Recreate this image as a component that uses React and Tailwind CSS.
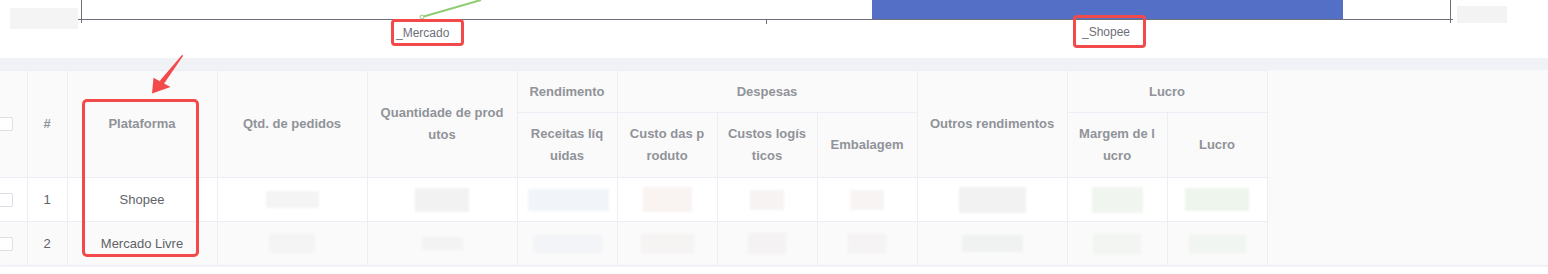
import React from 'react';

const th = 'border-r border-b border-[#ebeef5] px-[10px] text-center align-middle font-bold text-[13px] leading-[22px] text-[#909399] break-all';
const td = 'border-r border-b border-[#ebeef5] px-[10px] text-center align-middle text-[13px] leading-[22px] text-[#606266]';

const rows = [
  {
    id: 1,
    name: 'Shopee',
    bg: 'bg-white',
    blobs: [
      'w-[53px] h-[17px] bg-[#f4f4f4]',
      'w-[54px] h-[24px] bg-[#f2f2f2]',
      'w-[81px] h-[22px] bg-[#f1f4f8]',
      'w-[49px] h-[25px] bg-[#f9f3f2]',
      'w-[34px] h-[20px] bg-[#f7f3f3]',
      'w-[34px] h-[20px] bg-[#f8f4f4]',
      'w-[67px] h-[26px] bg-[#f2f2f2]',
      'w-[51px] h-[26px] bg-[#f0f5f0]',
      'w-[64px] h-[23px] bg-[#edf5ec]',
    ],
  },
  {
    id: 2,
    name: 'Mercado Livre',
    bg: 'bg-[#fafafa]',
    blobs: [
      'w-[46px] h-[19px] bg-[#f4f4f4]',
      'w-[41px] h-[13px] bg-[#f3f3f3]',
      'w-[69px] h-[18px] bg-[#f2f4f7]',
      'w-[53px] h-[19px] bg-[#f6f3f3]',
      'w-[38px] h-[21px] bg-[#f4f2f2]',
      'w-[38px] h-[19px] bg-[#f5f3f3]',
      'w-[61px] h-[17px] bg-[#f0f2f1]',
      'w-[48px] h-[20px] bg-[#f2f5f2]',
      'w-[57px] h-[18px] bg-[#f1f5f1]',
    ],
  },
];

const Checkbox = () => (
  <span className="-ml-px block h-[14px] w-[14px] rounded-[2px] border border-[#dcdfe6] bg-white" />
);

const Chart = () => (
  <svg width="1548" height="58" className="block">
    <rect x="10" y="8" width="68" height="21" fill="#f4f4f4" />
    <rect x="1457" y="6" width="50" height="17" fill="#f2f3f2" />
    <rect x="872" y="0" width="471" height="19" fill="#5470c6" />
    <line x1="81.5" y1="0" x2="81.5" y2="23" stroke="#6e7079" />
    <line x1="1450.5" y1="0" x2="1450.5" y2="23" stroke="#6e7079" />
    <line x1="78" y1="19.5" x2="1453" y2="19.5" stroke="#6e7079" />
    <line x1="766.5" y1="19" x2="766.5" y2="24" stroke="#6e7079" />
    <line x1="422" y1="17" x2="481" y2="0" stroke="#91cc75" strokeWidth="2" />
    <circle cx="422" cy="17" r="2" fill="#fff" stroke="#91cc75" />
    <text x="396" y="37" fontSize="12" fill="#6e7079" fontFamily="'Liberation Sans', Arial, sans-serif">_Mercado</text>
    <text x="1082" y="36" fontSize="12" fill="#6e7079" fontFamily="'Liberation Sans', Arial, sans-serif">_Shopee</text>
  </svg>
);

const Arrow = () => (
  <svg width="60" height="60" className="absolute left-[140px] top-[48px]" viewBox="140 48 60 60">
    <polygon points="183.2,55.8 182.2,54.8 159.6,81 163.6,84.2" fill="#f24a4a" />
    <polygon points="152,93.5 153.5,77.8 170.5,87" fill="#f24a4a" />
  </svg>
);

export default function App() {
  return (
    <div className="relative h-[274px] w-[1548px] overflow-hidden bg-white font-['Liberation_Sans',Arial,sans-serif]">
      <Chart />
      <div className="h-[12px] bg-[#f0f2f5]" />
      <div className="flex bg-[#fafafa]">
        <table className="w-[1267px] table-fixed border-collapse border-t border-[#ebeef5]">
          <colgroup>
            <col className="w-[27px]" />
            <col className="w-[40px]" />
            <col className="w-[150px]" />
            <col className="w-[150px]" />
            <col className="w-[150px]" />
            <col className="w-[100px]" />
            <col className="w-[100px]" />
            <col className="w-[100px]" />
            <col className="w-[100px]" />
            <col className="w-[150px]" />
            <col className="w-[100px]" />
            <col className="w-[100px]" />
          </colgroup>
          <thead className="bg-[#fafafa]">
            <tr className="h-[42px]">
              <th rowSpan={2} className="border-r border-b border-[#ebeef5] p-0 align-middle">
                <Checkbox />
              </th>
              <th rowSpan={2} className={th}>#</th>
              <th rowSpan={2} className={th}>Plataforma</th>
              <th rowSpan={2} className={th}>Qtd. de pedidos</th>
              <th rowSpan={2} className={th}>Quantidade de produtos</th>
              <th className={th}>Rendimento</th>
              <th colSpan={3} className={th}>Despesas</th>
              <th rowSpan={2} className={th}>Outros rendimentos</th>
              <th colSpan={2} className={th}>Lucro</th>
            </tr>
            <tr className="h-[65px]">
              <th className={th}>Receitas líquidas</th>
              <th className={th}>Custo das produto</th>
              <th className={th}>Custos logísticos</th>
              <th className={th}>Embalagem</th>
              <th className={th}>Margem de lucro</th>
              <th className={th}>Lucro</th>
            </tr>
          </thead>
          <tbody>
            {rows.map((row) => (
              <tr key={row.id} className={`h-[44px] ${row.bg}`}>
                <td className="border-r border-b border-[#ebeef5] p-0 align-middle">
                  <Checkbox />
                </td>
                <td className={td}>{row.id}</td>
                <td className={td}>{row.name}</td>
                {row.blobs.map((blob, i) => (
                  <td key={i} className={td}>
                    <div className={`mx-auto blur-[1px] ${blob}`} />
                  </td>
                ))}
              </tr>
            ))}
          </tbody>
        </table>
        <div className="flex-1 border-b border-[#ebeef5]" />
      </div>
      <div className="h-[8px] bg-white shadow-[inset_0_1px_2px_rgba(0,0,0,0.04)]" />

      <Arrow />
      <div className="absolute left-[82px] top-[99px] h-[158px] w-[117px] rounded-[5px] border-[3px] border-[#f24a4a]" />
      <div className="absolute left-[391px] top-[19px] h-[27px] w-[73px] rounded-[4px] border-[3px] border-[#f24a4a]" />
      <div className="absolute left-[1073px] top-[15px] h-[33px] w-[73px] rounded-[4px] border-[3px] border-[#f24a4a]" />
    </div>
  );
}
